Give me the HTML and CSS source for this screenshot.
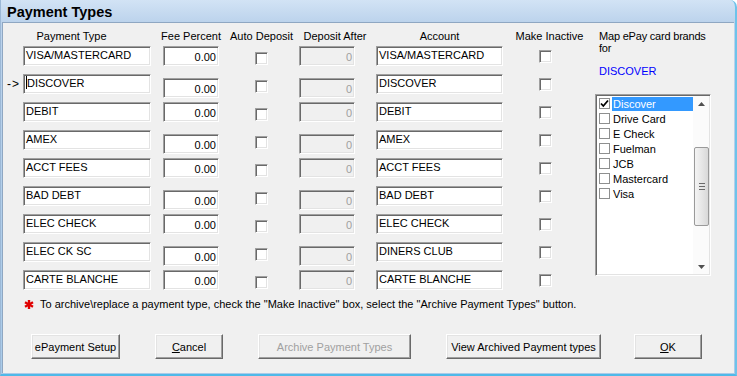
FILE: index.html
```html
<!DOCTYPE html>
<html>
<head>
    <meta charset="UTF-8">
    <title>Payment Types</title>
    <link rel="stylesheet" href="styles.css">
</head>
<body>
<div class="window">
    <div class="titlebar">Payment Types</div>
    <div class="client">
        <div class="main">
            <div class="form">
                <div class="heads">
                    <span class="h h-name">Payment Type</span>
                    <span class="h h-fee">Fee Percent</span>
                    <span class="h h-auto">Auto Deposit</span>
                    <span class="h h-dep">Deposit After</span>
                    <span class="h h-acct">Account</span>
                    <span class="h h-inact">Make Inactive</span>
                </div>

                <div class="row">
                    <span class="mark"></span>
                    <span class="fld name">VISA/MASTERCARD</span>
                    <span class="fld num">0.00</span>
                    <span class="cb auto"></span>
                    <span class="fld num off">0</span>
                    <span class="fld acct">VISA/MASTERCARD</span>
                    <span class="cb inact"></span>
                </div>
                <div class="row shift">
                    <span class="mark">-&gt;</span>
                    <span class="fld name"><i class="caret"></i>DISCOVER</span>
                    <span class="fld num">0.00</span>
                    <span class="cb auto"></span>
                    <span class="fld num off">0</span>
                    <span class="fld acct">DISCOVER</span>
                    <span class="cb inact"></span>
                </div>
                <div class="row">
                    <span class="mark"></span>
                    <span class="fld name">DEBIT</span>
                    <span class="fld num">0.00</span>
                    <span class="cb auto"></span>
                    <span class="fld num off">0</span>
                    <span class="fld acct">DEBIT</span>
                    <span class="cb inact"></span>
                </div>
                <div class="row shift">
                    <span class="mark"></span>
                    <span class="fld name">AMEX</span>
                    <span class="fld num">0.00</span>
                    <span class="cb auto"></span>
                    <span class="fld num off">0</span>
                    <span class="fld acct">AMEX</span>
                    <span class="cb inact"></span>
                </div>
                <div class="row">
                    <span class="mark"></span>
                    <span class="fld name">ACCT FEES</span>
                    <span class="fld num">0.00</span>
                    <span class="cb auto"></span>
                    <span class="fld num off">0</span>
                    <span class="fld acct">ACCT FEES</span>
                    <span class="cb inact"></span>
                </div>
                <div class="row shift">
                    <span class="mark"></span>
                    <span class="fld name">BAD DEBT</span>
                    <span class="fld num">0.00</span>
                    <span class="cb auto"></span>
                    <span class="fld num off">0</span>
                    <span class="fld acct">BAD DEBT</span>
                    <span class="cb inact"></span>
                </div>
                <div class="row">
                    <span class="mark"></span>
                    <span class="fld name">ELEC CHECK</span>
                    <span class="fld num">0.00</span>
                    <span class="cb auto"></span>
                    <span class="fld num off">0</span>
                    <span class="fld acct">ELEC CHECK</span>
                    <span class="cb inact"></span>
                </div>
                <div class="row shift">
                    <span class="mark"></span>
                    <span class="fld name">ELEC CK SC</span>
                    <span class="fld num">0.00</span>
                    <span class="cb auto"></span>
                    <span class="fld num off">0</span>
                    <span class="fld acct">DINERS CLUB</span>
                    <span class="cb inact"></span>
                </div>
                <div class="row">
                    <span class="mark"></span>
                    <span class="fld name">CARTE BLANCHE</span>
                    <span class="fld num">0.00</span>
                    <span class="cb auto"></span>
                    <span class="fld num off">0</span>
                    <span class="fld acct">CARTE BLANCHE</span>
                    <span class="cb inact"></span>
                </div>
            </div>

            <div class="brands">
                <p class="brands-lbl">Map ePay card brands for</p>
                <p class="brands-sel">DISCOVER</p>
                <div class="list">
                    <ul class="items">
                        <li class="item"><span class="lcb"><svg width="9" height="9" viewBox="0 0 9 9"><path d="M1 4.5 L3.3 7 L8 1.5" fill="none" stroke="#000" stroke-width="1.8"/></svg></span><span class="txt sel">Discover</span></li>
                        <li class="item"><span class="lcb"></span><span class="txt">Drive Card</span></li>
                        <li class="item"><span class="lcb"></span><span class="txt">E Check</span></li>
                        <li class="item"><span class="lcb"></span><span class="txt">Fuelman</span></li>
                        <li class="item"><span class="lcb"></span><span class="txt">JCB</span></li>
                        <li class="item"><span class="lcb"></span><span class="txt">Mastercard</span></li>
                        <li class="item"><span class="lcb"></span><span class="txt">Visa</span></li>
                    </ul>
                    <div class="sb">
                        <span class="sb-btn"><svg width="7" height="4" viewBox="0 0 7 4"><path d="M0 4 L3.5 0 L7 4 Z" fill="#505050"/></svg></span>
                        <span class="sb-track"><span class="thumb"><i></i><i></i><i></i></span></span>
                        <span class="sb-btn"><svg width="7" height="4" viewBox="0 0 7 4"><path d="M0 0 L7 0 L3.5 4 Z" fill="#505050"/></svg></span>
                    </div>
                </div>
            </div>
        </div>

        <p class="note">
            <svg class="star" width="10" height="9" viewBox="0 0 10 9"><g stroke="#e00000" stroke-width="2.4"><path d="M5 0 V9"/><path d="M1 2.3 L9 6.7"/><path d="M1 6.7 L9 2.3"/></g></svg>
            <span>To archive\replace a payment type, check the "Make Inactive" box, select the "Archive Payment Types" button.</span>
        </p>

        <div class="buttons">
            <span class="btn b-setup">ePayment Setup</span>
            <span class="btn b-cancel"><u>C</u>ancel</span>
            <span class="btn b-archive off">Archive Payment Types</span>
            <span class="btn b-view">View Archived Payment types</span>
            <span class="btn b-ok"><u>O</u>K</span>
        </div>
    </div>
</div>
</body>
</html>
```

FILE: styles.css
```css
html,body,div,p,ul,li{ margin: 0; padding: 0; }
body{ font-family: "Liberation Sans", Arial, sans-serif; font-size: 11px; color: #000; background: #fff; }

.window{ width: 737px; height: 376px; box-sizing: border-box; display: flex; flex-direction: column;
    background: linear-gradient(#d2e3f5, #bcd3ec 22px, #a9cbe9);
    border-left: 1px solid #9cb8d6; border-right: 2px solid #6ec3ea; border-bottom: 2px solid #4fb9e8;
    border-radius: 0 7px 0 0; }
.titlebar{ height: 20px; padding: 2px 0 0 6px; font-size: 14.5px; font-weight: bold; line-height: 20px; }
.client{ flex: 1; margin: 0 1px 1px 1px; background: #f0f0f0; border-top: 1px solid #8fa7c2; border-left: 1px solid #8fa7c2; }

.main{ display: flex; padding-top: 7px; }
.form{ padding-left: 4px; }

/* grid columns: marker, name, fee, auto, deposit, account, inactive */
.heads,.row{ display: grid; grid-template-columns: 16px 140px 92px 44px 77px 163px 13px; }
.heads{ height: 13px; margin-bottom: 3px; line-height: 13px; }
.h{ display: flex; justify-content: center; white-space: nowrap; }
.h-name{ grid-column: 2; width: 97px; }
.h-fee{ grid-column: 3; width: 56px; }
.h-auto{ grid-column: 4; width: 13px; }
.h-dep{ grid-column: 5; width: 56px; padding-left: 8px; }
.h-acct{ grid-column: 6; width: 127px; }
.h-inact{ grid-column: 7; width: 13px; padding-left: 4px; }

.row{ height: 28px; align-items: start; }
.mark{ font-size: 12px; line-height: 20px; letter-spacing: 1px; }

.fld{ display: block; height: 20px; box-sizing: border-box; padding: 1px 2px 0 2px; line-height: 15px; white-space: nowrap; overflow: hidden;
    background: #fff; border: 1px solid; border-color: #a0a0a0 #fff #fff #a0a0a0;
    box-shadow: inset 1px 1px #696969, inset -1px -1px #e3e3e3; }
.name{ width: 128px; }
.acct{ width: 127px; }
.num{ width: 56px; text-align: right; padding-top: 3px; }
.num.off{ background: #f0f0f0; color: #a0a0a0; }
.shift .num{ margin-top: 4px; }
.caret{ display: inline-block; width: 1px; height: 13px; background: #000; vertical-align: -2px; }

.cb{ display: block; width: 13px; height: 13px; box-sizing: border-box; background: #fff;
    border: 1px solid; border-color: #a0a0a0 #fff #fff #a0a0a0;
    box-shadow: inset 1px 1px #696969, inset -1px -1px #e3e3e3; }
.auto{ margin-top: 6px; }
.inact{ margin-top: 4px; }

.brands{ margin-left: 43px; width: 116px; }
.brands-lbl{ padding-left: 4px; line-height: 12px; letter-spacing: -0.2px; }
.brands-sel{ padding-left: 4px; margin-top: 11px; line-height: 13px; color: #0000ff; }
.list{ margin-top: 16px; width: 116px; height: 182px; box-sizing: border-box; padding: 1px; display: flex;
    background: #fff; border: 1px solid; border-color: #a0a0a0 #fff #fff #a0a0a0;
    box-shadow: inset 1px 1px #696969, inset -1px -1px #e3e3e3; }
.items{ flex: 1; list-style: none; }
.item{ height: 15px; display: flex; align-items: center; }
.lcb{ width: 11px; height: 11px; box-sizing: border-box; margin-left: 2px; border: 1px solid #8e8f8f; background: #fff;
    display: flex; align-items: center; justify-content: center; }
.txt{ flex: 1; margin-left: 2px; padding-left: 1px; line-height: 14px; }
.txt.sel{ background: #3399ff; color: #fff; }

.sb{ width: 16px; display: flex; flex-direction: column; background: #fbfbfb; }
.sb-btn{ height: 15px; display: flex; align-items: center; justify-content: center; }
.sb-track{ flex: 1; }
.thumb{ display: flex; flex-direction: column; align-items: center; justify-content: center; gap: 2px;
    margin: 36px 0 0 1px; width: 15px; height: 79px; box-sizing: border-box;
    border: 1px solid #9a9a9a; border-radius: 2px; background: linear-gradient(90deg, #f4f4f4, #e4e4e4 60%, #d8d8d8); }
.thumb i{ display: block; width: 6px; height: 1px; background: #6a6a6a; }

.note{ display: flex; align-items: center; height: 13px; line-height: 13px; padding-left: 21px; }
.star{ margin-right: 6px; }

.buttons{ display: flex; gap: 35px; margin-top: 23px; padding-left: 28px; }
.btn{ height: 25px; box-sizing: border-box; display: flex; align-items: center; justify-content: center; white-space: nowrap;
    background: #f0f0f0; border: 1px solid; border-color: #fff #696969 #696969 #fff;
    box-shadow: inset -1px -1px #a0a0a0, inset 1px 1px #e3e3e3; }
.btn u{ text-decoration: underline; }
.btn.off{ color: #a0a0a0; }
.b-setup{ width: 89px; }
.b-cancel{ width: 68px; }
.b-archive{ width: 153px; }
.b-view{ width: 155px; }
.b-ok{ width: 68px; margin-left: -2px; }
```
